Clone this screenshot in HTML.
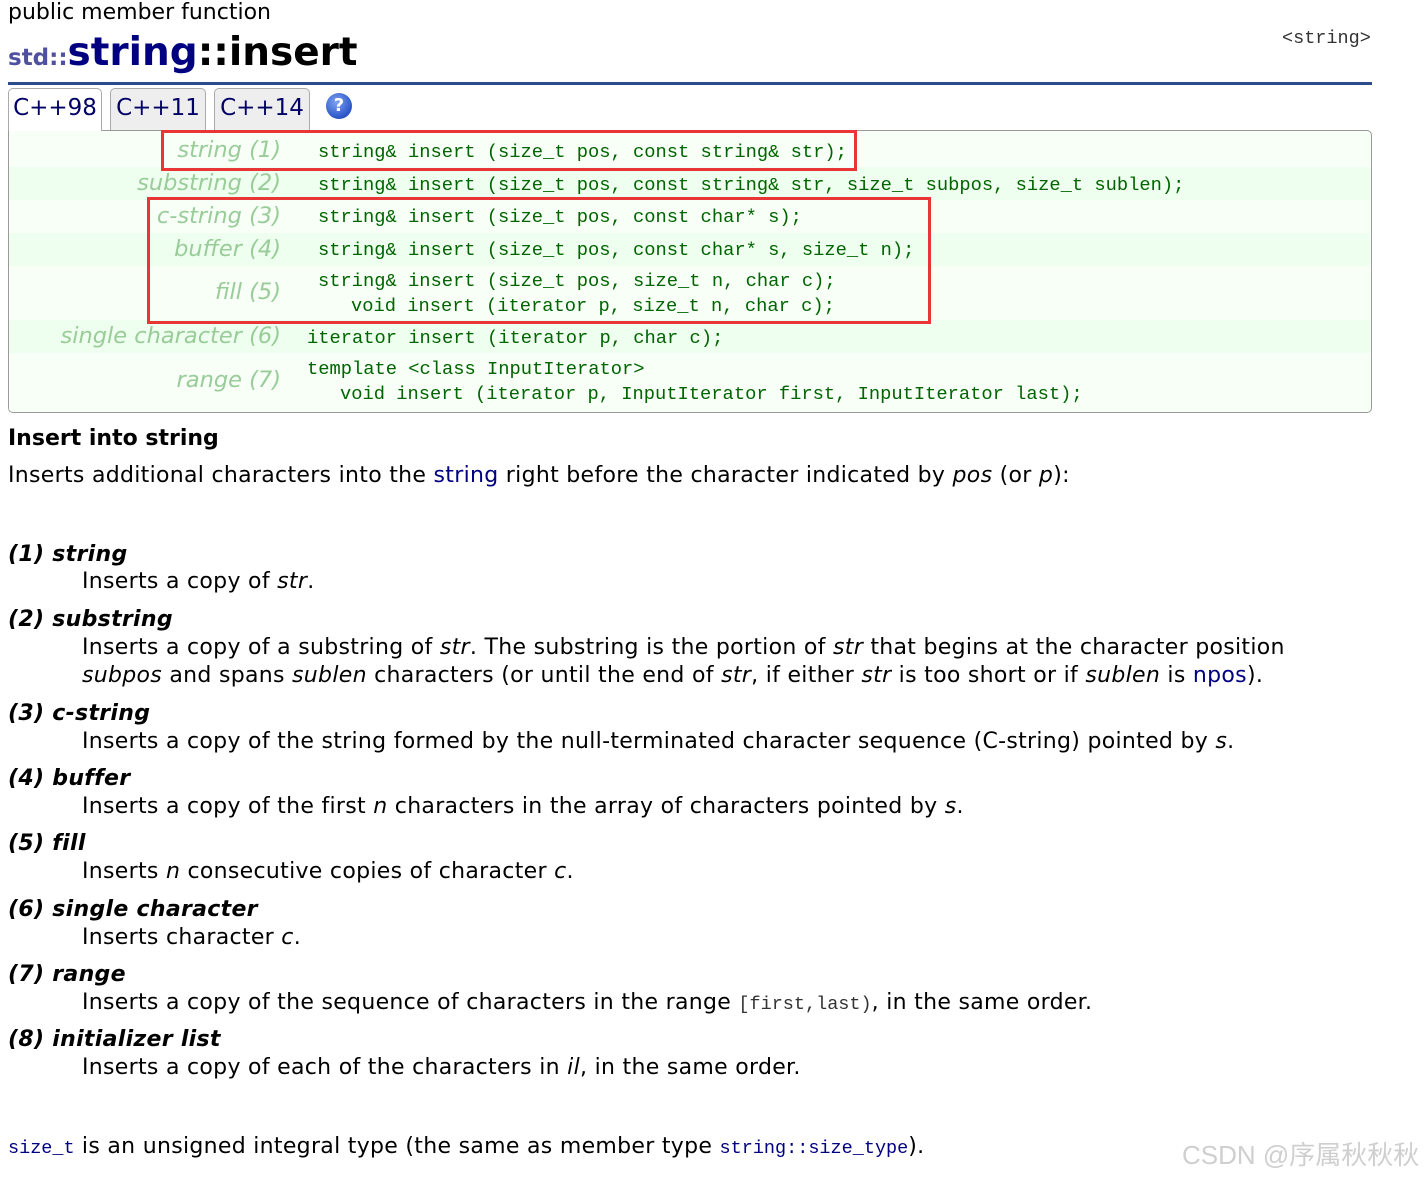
<!DOCTYPE html>
<html><head><meta charset="utf-8"><style>
body{margin:0;width:1424px;height:1180px;background:#fff;position:relative;overflow:hidden;font-family:"DejaVu Sans",sans-serif;color:#000}
.a{position:absolute;white-space:nowrap}
.m{font-family:"Liberation Mono","DejaVu Sans Mono",monospace;font-size:18.75px;color:#006400}
.lab{font-family:"DejaVu Sans",sans-serif;font-style:italic;font-size:22.5px;color:#99cc99;text-align:right;right:1143px}
.t{font-size:22px;line-height:28px;letter-spacing:0.3px}
.h{font-size:22px;font-weight:bold;font-style:italic;line-height:28px;letter-spacing:0.3px}
.row{position:absolute;left:9px;width:1361px;border-bottom:1px dashed #dde8dd}
.tab{position:absolute;top:88px;height:41px;border:1px solid #aaa;border-bottom:none;border-radius:5px 5px 0 0;background:#eee;font-size:23px;color:#000066;text-align:center;line-height:38px}
.lk{color:#000080}
.mm{font-family:"Liberation Mono",monospace;font-size:18.5px;color:#000080;letter-spacing:0}
</style></head><body>
<div class="a" style="left:8px;top:-1px;font-size:22px;line-height:28px">public member function</div>
<div class="a" style="left:8px;top:29px;line-height:48px;font-weight:bold"><span style="font-size:23px;color:#5050a0">std::</span><span style="font-size:39px;color:#000080">string</span><span style="font-size:39px">::insert</span></div>
<div class="a mm" style="left:1282px;top:28px;color:#333">&lt;string&gt;</div>
<div class="a" style="left:8px;top:82px;width:1364px;height:3px;background:#2b4b8b"></div>
<div class="tab" style="left:8px;width:92px;background:#fff;height:42px;z-index:2">C++98</div>
<div class="tab" style="left:110px;width:94px">C++11</div>
<div class="tab" style="left:214px;width:94px">C++14</div>
<div class="a" style="left:326px;top:93px;width:26px;height:26px;border-radius:50%;background:radial-gradient(circle at 40% 35%,#7fa3f0,#2a55c8 70%,#1a3a9a);color:#fff;font-weight:bold;font-size:18px;text-align:center;line-height:26px">?</div>
<div class="a" style="left:8px;top:130px;width:1362px;height:281px;border:1px solid #999;border-radius:0 5px 5px 5px;background:#f7fff7"></div>
<div class="row" style="top:134px;height:33px;background:#f7fff7"></div>
<div class="row" style="top:167px;height:33px;background:#efffef"></div>
<div class="row" style="top:200px;height:33px;background:#f7fff7"></div>
<div class="row" style="top:233px;height:33px;background:#efffef"></div>
<div class="row" style="top:266px;height:54px;background:#f7fff7"></div>
<div class="row" style="top:320px;height:33px;background:#efffef"></div>
<div class="row" style="top:353px;height:57px;background:#f7fff7;border:none"></div>

<div class="a lab" style="top:137px">string (1)</div>
<div class="a lab" style="top:170px">substring (2)</div>
<div class="a lab" style="top:203px">c-string (3)</div>
<div class="a lab" style="top:236px">buffer (4)</div>
<div class="a lab" style="top:279px">fill (5)</div>
<div class="a lab" style="top:323px">single character (6)</div>
<div class="a lab" style="top:367px">range (7)</div>

<div class="a m" style="left:318px;top:141px">string&amp; insert (size_t pos, const string&amp; str);</div>
<div class="a m" style="left:318px;top:174px">string&amp; insert (size_t pos, const string&amp; str, size_t subpos, size_t sublen);</div>
<div class="a m" style="left:318px;top:206px">string&amp; insert (size_t pos, const char* s);</div>
<div class="a m" style="left:318px;top:239px">string&amp; insert (size_t pos, const char* s, size_t n);</div>
<div class="a m" style="left:318px;top:270px">string&amp; insert (size_t pos, size_t n, char c);</div>
<div class="a m" style="left:351px;top:295px">void insert (iterator p, size_t n, char c);</div>
<div class="a m" style="left:307px;top:327px">iterator insert (iterator p, char c);</div>
<div class="a m" style="left:307px;top:358px">template &lt;class InputIterator&gt;</div>
<div class="a m" style="left:340px;top:383px">void insert (iterator p, InputIterator first, InputIterator last);</div>

<div class="a" style="left:161px;top:130px;width:690px;height:35px;border:3px solid #e83535"></div>
<div class="a" style="left:147px;top:197px;width:778px;height:121px;border:3px solid #e83535"></div>

<div class="a" style="left:8px;top:425px;font-size:22px;font-weight:bold;line-height:28px">Insert into string</div>
<div class="a t" style="left:8px;top:462px">Inserts additional characters into the <span class="lk">string</span> right before the character indicated by <i>pos</i> (or <i>p</i>):</div>

<div class="a h" style="left:8px;top:541px">(1) string</div>
<div class="a t" style="left:82px;top:568px">Inserts a copy of <i>str</i>.</div>
<div class="a h" style="left:8px;top:606px">(2) substring</div>
<div class="a t" style="left:82px;top:634px">Inserts a copy of a substring of <i>str</i>. The substring is the portion of <i>str</i> that begins at the character position</div>
<div class="a t" style="left:82px;top:662px"><i>subpos</i> and spans <i>sublen</i> characters (or until the end of <i>str</i>, if either <i>str</i> is too short or if <i>sublen</i> is <span class="lk">npos</span>).</div>
<div class="a h" style="left:8px;top:700px">(3) c-string</div>
<div class="a t" style="left:82px;top:728px">Inserts a copy of the string formed by the null-terminated character sequence (C-string) pointed by <i>s</i>.</div>
<div class="a h" style="left:8px;top:765px">(4) buffer</div>
<div class="a t" style="left:82px;top:793px">Inserts a copy of the first <i>n</i> characters in the array of characters pointed by <i>s</i>.</div>
<div class="a h" style="left:8px;top:830px">(5) fill</div>
<div class="a t" style="left:82px;top:858px">Inserts <i>n</i> consecutive copies of character <i>c</i>.</div>
<div class="a h" style="left:8px;top:896px">(6) single character</div>
<div class="a t" style="left:82px;top:924px">Inserts character <i>c</i>.</div>
<div class="a h" style="left:8px;top:961px">(7) range</div>
<div class="a t" style="left:82px;top:989px">Inserts a copy of the sequence of characters in the range <span class="mm" style="color:#333">[first,last)</span>, in the same order.</div>
<div class="a h" style="left:8px;top:1026px">(8) initializer list</div>
<div class="a t" style="left:82px;top:1054px">Inserts a copy of each of the characters in <i>il</i>, in the same order.</div>

<div class="a t" style="left:8px;top:1133px"><span class="mm">size_t</span> is an unsigned integral type (the same as member type <span class="mm">string::size_type</span>).</div>
<div class="a" style="left:1182px;top:1139px;font-size:26px;line-height:32px;color:#cfcfcf;font-family:'Liberation Sans','Noto Sans CJK SC',sans-serif">CSDN @序属秋秋秋</div>
</body></html>
